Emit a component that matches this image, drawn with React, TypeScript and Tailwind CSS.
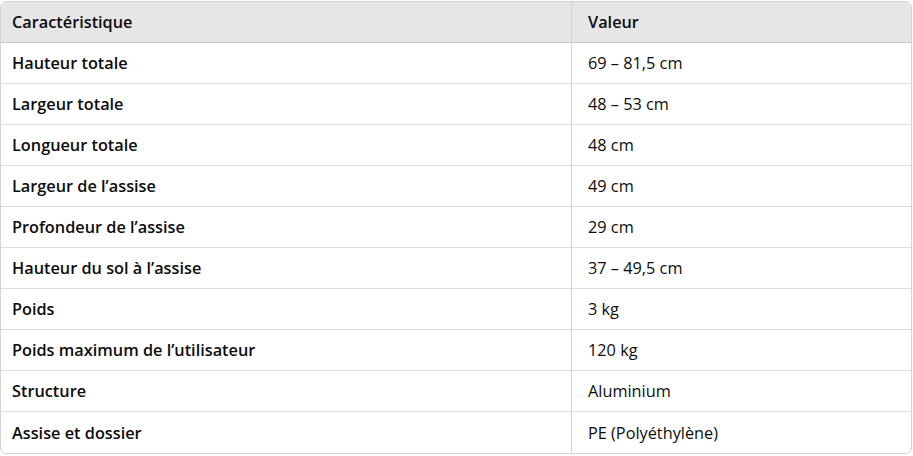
import React from "react";

const rows: [string, string][] = [
  ["Hauteur totale", "69 – 81,5 cm"],
  ["Largeur totale", "48 – 53 cm"],
  ["Longueur totale", "48 cm"],
  ["Largeur de l’assise", "49 cm"],
  ["Profondeur de l’assise", "29 cm"],
  ["Hauteur du sol à l’assise", "37 – 49,5 cm"],
  ["Poids", "3 kg"],
  ["Poids maximum de l’utilisateur", "120 kg"],
  ["Structure", "Aluminium"],
  ["Assise et dossier", "PE (Polyéthylène)"],
];

export default function App() {
  return (
    <div className="w-[913px] h-[456px] bg-white pt-px" style={{ fontFamily: '"Open Sans", sans-serif' }}>
      <div className="w-[912px] border border-[#d4d4d4] rounded-[6px] overflow-hidden text-[16.3px] text-[#0d0d0d]">
        <div className="flex h-[41px] items-center bg-[#e6e6e6] border-b border-[#c8c8c8] font-semibold">
          <div className="w-[571px] h-full flex items-center pl-[11px] pt-[1px] border-r border-[#d4d4d4]">Caractéristique</div>
          <div className="flex-1 pl-[16px] pt-[1px]">Valeur</div>
        </div>
        {rows.map(([k, v], i) => (
          <div key={k} className={`flex h-[41px] items-center ${i < rows.length - 1 ? "border-b border-[#dcdcdc]" : ""}`}>
            <div className="w-[571px] h-full flex items-center pl-[11px] pt-[1px] border-r border-[#d4d4d4] font-semibold">{k}</div>
            <div className="flex-1 pl-[16px] pt-[1px]">{v}</div>
          </div>
        ))}
      </div>
    </div>
  );
}
